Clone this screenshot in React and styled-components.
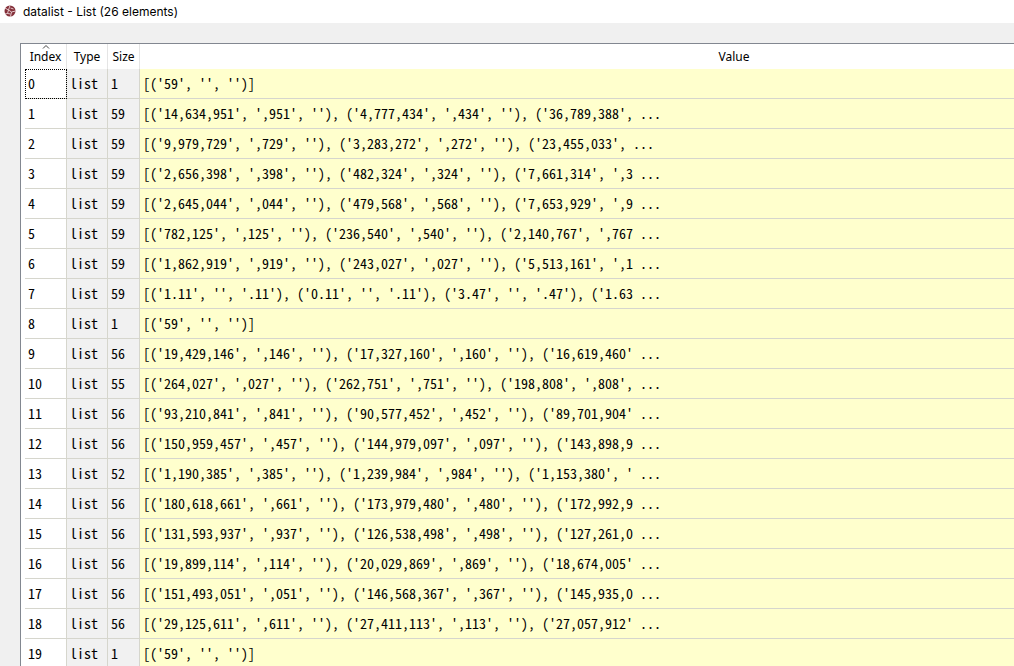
import React from 'react';
import styled, { createGlobalStyle } from 'styled-components';

const GlobalStyle = createGlobalStyle`
  body {
    margin: 0;
    overflow: hidden;
    background: #f0f0f0;
    color: #000;
  }
`;

const Window = styled.div`
  display: flex;
  flex-direction: column;
  height: 100vh;
  overflow: hidden;
  font-family: 'Noto Sans', 'Open Sans', sans-serif;
  font-size: 12px;
`;

const TitleBar = styled.header`
  display: flex;
  flex: none;
  align-items: center;
  gap: 7px;
  height: 23px;
  padding-left: 4px;
  background: #fff;
`;

const TitleIcon = styled.svg`
  flex: none;
  margin-bottom: 2px;
`;

const Title = styled.h1`
  margin: 0;
  font-family: Inter, 'Noto Sans', sans-serif;
  font-size: 12px;
  font-weight: 400;
  line-height: 22px;
`;

const Body = styled.main`
  display: flex;
  flex: 1;
  min-height: 0;
  padding: 20px 0 0 20px;
`;

const TableFrame = styled.div`
  flex: 1;
  min-width: 0;
  overflow: hidden;
  padding-left: 4px;
  border: solid #828790;
  border-width: 1px 0 0 1px;
  background: #fff;
`;

const Table = styled.table`
  width: 1304px;
  table-layout: fixed;
  border-collapse: separate;
  border-spacing: 0;
`;

const Column = styled.col`
  width: ${(props) => props.$width};
`;

const HeaderCell = styled.th`
  position: relative;
  height: 25px;
  padding: 0;
  border-right: 1px solid #e5e5e5;
  font-weight: 400;
`;

const HeaderButton = styled.button`
  display: block;
  width: 100%;
  padding: 0;
  border: 0;
  background: none;
  color: inherit;
  font: inherit;
  line-height: 25px;
  text-align: center;
`;

const SortArrow = styled.svg`
  position: absolute;
  top: 0;
  left: 17px;
`;

const Cell = styled.td`
  height: 29px;
  padding: 0 0 0 3px;
  border: solid #d6d6cd;
  border-width: 0 1px 1px 0;
  background: ${(props) => props.$background};
  font-family: 'Noto Sans Mono CJK SC', 'Liberation Mono', monospace;
  font-size: 14px;
  line-height: 29px;
  white-space: pre;
  outline: ${(props) => (props.$focused ? '1px dotted #000' : 'none')};
  outline-offset: -1px;
`;

const headers = ['Index', 'Type', 'Size', 'Value'];

const items = [
  [1, "[('59', '', '')]"],
  [59, "[('14,634,951', ',951', ''), ('4,777,434', ',434', ''), ('36,789,388', ..."],
  [59, "[('9,979,729', ',729', ''), ('3,283,272', ',272', ''), ('23,455,033', ..."],
  [59, "[('2,656,398', ',398', ''), ('482,324', ',324', ''), ('7,661,314', ',3 ..."],
  [59, "[('2,645,044', ',044', ''), ('479,568', ',568', ''), ('7,653,929', ',9 ..."],
  [59, "[('782,125', ',125', ''), ('236,540', ',540', ''), ('2,140,767', ',767 ..."],
  [59, "[('1,862,919', ',919', ''), ('243,027', ',027', ''), ('5,513,161', ',1 ..."],
  [59, "[('1.11', '', '.11'), ('0.11', '', '.11'), ('3.47', '', '.47'), ('1.63 ..."],
  [1, "[('59', '', '')]"],
  [56, "[('19,429,146', ',146', ''), ('17,327,160', ',160', ''), ('16,619,460' ..."],
  [55, "[('264,027', ',027', ''), ('262,751', ',751', ''), ('198,808', ',808', ..."],
  [56, "[('93,210,841', ',841', ''), ('90,577,452', ',452', ''), ('89,701,904' ..."],
  [56, "[('150,959,457', ',457', ''), ('144,979,097', ',097', ''), ('143,898,9 ..."],
  [52, "[('1,190,385', ',385', ''), ('1,239,984', ',984', ''), ('1,153,380', ' ..."],
  [56, "[('180,618,661', ',661', ''), ('173,979,480', ',480', ''), ('172,992,9 ..."],
  [56, "[('131,593,937', ',937', ''), ('126,538,498', ',498', ''), ('127,261,0 ..."],
  [56, "[('19,899,114', ',114', ''), ('20,029,869', ',869', ''), ('18,674,005' ..."],
  [56, "[('151,493,051', ',051', ''), ('146,568,367', ',367', ''), ('145,935,0 ..."],
  [56, "[('29,125,611', ',611', ''), ('27,411,113', ',113', ''), ('27,057,912' ..."],
  [1, "[('59', '', '')]"],
];

const AppIcon = () => (
  <TitleIcon width="12" height="12" viewBox="0 0 12 12" aria-hidden="true">
    <circle cx="6" cy="6" r="5.5" fill="#84303a" />
    <g fill="none" stroke="#ecd6d8" strokeWidth="0.9">
      <path d="M4.500 5 1 3M4.500 5 6 .5M4.500 5l3 2 4-1M7.500 7l-1 4.500M4.500 5 3.500 8.500 1 9" />
      <path d="M6.500 3 9.500 4M3.500 8.500l3 .5" />
    </g>
  </TitleIcon>
);

const App = () => (
  <Window>
    <GlobalStyle />
    <TitleBar>
      <AppIcon />
      <Title>datalist - List (26 elements)</Title>
    </TitleBar>
    <Body>
      <TableFrame>
        <Table>
          <colgroup>
            <Column $width="42px" />
            <Column $width="41px" />
            <Column $width="32px" />
            <Column $width="auto" />
          </colgroup>
          <thead>
            <tr>
              {headers.map((header) => (
                <HeaderCell key={header} scope="col">
                  <HeaderButton type="button">{header}</HeaderButton>
                  {header === 'Index' && (
                    <SortArrow width="8" height="5" viewBox="0 0 8 5" aria-hidden="true">
                      <path d="M1 4.500 4 1.500l3 3" fill="none" stroke="#444" />
                    </SortArrow>
                  )}
                </HeaderCell>
              ))}
            </tr>
          </thead>
          <tbody>
            {items.map(([size, value], index) => (
              <tr key={index}>
                <Cell $background="#fff" $focused={index === 0}>{index}</Cell>
                <Cell $background="#f1f1f1">list</Cell>
                <Cell $background="#f1f1f1">{size}</Cell>
                <Cell $background="#ffffcd">{value}</Cell>
              </tr>
            ))}
          </tbody>
        </Table>
      </TableFrame>
    </Body>
  </Window>
);

export default App;
